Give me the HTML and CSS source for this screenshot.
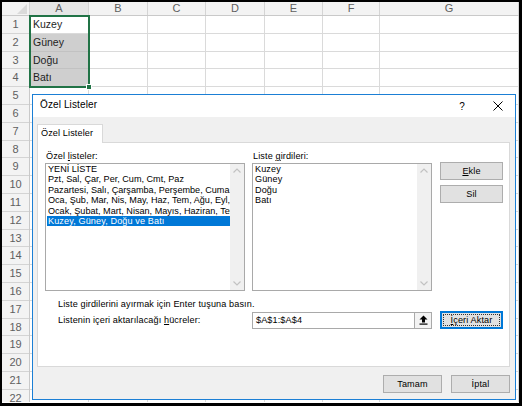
FILE: index.html
```html
<!DOCTYPE html>
<html>
	<head>
		<meta charset="utf-8">
		<title>Özel Listeler</title>

		<link rel="stylesheet" href="styles.css">
	</head>
	<body>
		<div class="frame">
			<div class="col-heads">
				<div class="corner w-hd"><span class="corner-tri"></span></div>
				<div class="col-head w-a sel">A</div>
				<div class="col-head w-b">B</div>
				<div class="col-head w-c">C</div>
				<div class="col-head w-d">D</div>
				<div class="col-head w-e">E</div>
				<div class="col-head w-f">F</div>
				<div class="col-head w-g">G</div>
			</div>
			<div class="sheet-body">
				<div class="row-heads w-hd">
					<div class="row-head">1</div>
					<div class="row-head">2</div>
					<div class="row-head">3</div>
					<div class="row-head">4</div>
					<div class="row-head">5</div>
					<div class="row-head">6</div>
					<div class="row-head">7</div>
					<div class="row-head">8</div>
					<div class="row-head">9</div>
					<div class="row-head">10</div>
					<div class="row-head">11</div>
					<div class="row-head">12</div>
					<div class="row-head">13</div>
					<div class="row-head">14</div>
					<div class="row-head">15</div>
					<div class="row-head">16</div>
					<div class="row-head">17</div>
					<div class="row-head">18</div>
					<div class="row-head">19</div>
					<div class="row-head">20</div>
					<div class="row-head">21</div>
					<div class="row-head">22</div>
				</div>
				<div class="col w-a col-a">
					<div class="cell">Kuzey</div>
					<div class="cell shaded">Güney</div>
					<div class="cell shaded">Doğu</div>
					<div class="cell shaded">Batı</div>
					<div class="selection"><span class="fill-handle"></span></div>
				</div>
				<div class="col w-b"></div>
				<div class="col w-c"></div>
				<div class="col w-d"></div>
				<div class="col w-e"></div>
				<div class="col w-f"></div>
				<div class="col w-g"></div>
			</div>

			<div class="dialog">
				<div class="dlg-title">
					<span class="dlg-caption">Özel Listeler</span>
					<span class="dlg-help">?</span>
					<span class="dlg-close">
						<svg width="10" height="10" viewBox="0 0 10 10"><path d="M0.5 0.5 9.5 9.5M9.5 0.5 0.5 9.5" stroke="#000" stroke-width="1" fill="none"/></svg>
					</span>
				</div>
				<div class="dlg-body">
					<div class="tabs">
						<div class="tab">Özel Listeler</div>
					</div>
					<div class="tab-page">
						<div class="lists">
							<div class="field-label">Özel <u>l</u>isteler:</div>
							<div class="field-label">Liste <u>g</u>irdileri:</div>
							<div></div>

							<div class="listbox">
								<ul class="items">
									<li>YENİ LİSTE</li>
									<li>Pzt, Sal, Çar, Per, Cum, Cmt, Paz</li>
									<li>Pazartesi, Salı, Çarşamba, Perşembe, Cuma, Cu</li>
									<li>Oca, Şub, Mar, Nis, May, Haz, Tem, Ağu, Eyl, Eki</li>
									<li>Ocak, Şubat, Mart, Nisan, Mayıs, Haziran, Tem</li>
									<li class="selected">Kuzey, Güney, Doğu ve Batı</li>
								</ul>
								<div class="vscroll">
									<svg width="14" height="14" viewBox="0 0 14 14"><path d="M3.5 8.5 7 5l3.5 3.5" fill="none" stroke="#c2c2c2" stroke-width="1.2"/></svg>
									<svg width="14" height="14" viewBox="0 0 14 14"><path d="M3.5 5.5 7 9l3.5-3.5" fill="none" stroke="#c2c2c2" stroke-width="1.2"/></svg>
								</div>
							</div>

							<div class="listbox">
								<div class="entries">
									<div>Kuzey</div>
									<div>Güney</div>
									<div>Doğu</div>
									<div>Batı</div>
								</div>
								<div class="vscroll">
									<svg width="14" height="14" viewBox="0 0 14 14"><path d="M3.5 8.5 7 5l3.5 3.5" fill="none" stroke="#c2c2c2" stroke-width="1.2"/></svg>
									<svg width="14" height="14" viewBox="0 0 14 14"><path d="M3.5 5.5 7 9l3.5-3.5" fill="none" stroke="#c2c2c2" stroke-width="1.2"/></svg>
								</div>
							</div>

							<div class="side-buttons">
								<button class="btn"><u>E</u>kle</button>
								<button class="btn">Sil</button>
							</div>
						</div>

						<p class="hint">Liste girdilerini ayırmak için Enter tuşuna basın.</p>

						<div class="import-row">
							<label class="import-label">Listenin içeri aktarılacağı <u>h</u>ücreler:</label>
							<div class="ref-box">
								<span class="ref-text">$A$1:$A$4</span>
								<span class="ref-btn">
									<svg width="9" height="10" viewBox="0 0 9 10"><path d="M4.5 0.5 8.5 4.5H6V7.5H3V4.5H0.5Z" fill="#000"/><rect x="0.5" y="8.5" width="8" height="1.2" fill="#000"/></svg>
								</span>
							</div>
							<button class="btn btn-focus"><span class="focus-rect"><u>İ</u>çeri Aktar</span></button>
						</div>
					</div>
					<div class="dlg-footer">
						<button class="btn btn-wide">Tamam</button>
						<button class="btn btn-wide">İptal</button>
					</div>
				</div>
			</div>
		</div>
	</body>
</html>
```

FILE: styles.css
```css
* {
	margin: 0;
	padding: 0;
	box-sizing: border-box;
}

body {
	background: #ffffff;
	font-family: "Liberation Sans", Arial, sans-serif;
}

.frame {
	position: relative;
	width: 522px;
	height: 406px;
	border: solid #000000;
	border-width: 2px 3px 3px 2px;
	overflow: hidden;
	background: #ffffff;
}

/* column widths shared by header and body */
.w-hd { width: 28px; flex: none; }
.w-a, .w-b, .w-d { width: 59px; flex: none; }
.w-c, .w-e { width: 58px; flex: none; }
.w-f { width: 57px; flex: none; }
.w-g { flex: 1; }

.col-heads {
	display: flex;
	height: 14px;
	background: #f3f3f3;
	border-bottom: 1px solid #c9c9c9;
}

.corner {
	position: relative;
	border-right: 1px solid #d4d4d4;
}

.corner-tri {
	position: absolute;
	right: 2px;
	bottom: 1px;
	width: 0;
	height: 0;
	border-left: 10px solid transparent;
	border-bottom: 10px solid #dadada;
}

.col-head {
	border-right: 1px solid #d4d4d4;
	font-size: 11px;
	line-height: 13px;
	color: #5f5f5f;
	text-align: center;
}

.col-head.sel {
	background: #e6e6e6;
}

.sheet-body {
	display: flex;
	height: 386px;
}

.row-heads {
	background: #f3f3f3;
	border-right: 1px solid #c9c9c9;
}

.row-head {
	height: 17.8px;
	border-bottom: 1px solid #d4d4d4;
	font-size: 11px;
	line-height: 17px;
	color: #5f5f5f;
	text-align: center;
}

.col {
	border-right: 1px solid #dadada;
	background: repeating-linear-gradient(to bottom, #ffffff 0, #ffffff 16.8px, #dadada 16.8px, #dadada 17.8px);
}

.col-a {
	position: relative;
}

.cell {
	height: 17.8px;
	padding-left: 3px;
	border-bottom: 1px solid #dadada;
	background: #ffffff;
	font-size: 10.5px;
	line-height: 17px;
	color: #1e1e1e;
}

.cell.shaded {
	background: #cfcfcf;
	border-bottom-color: #c2c2c2;
}

.selection {
	position: absolute;
	left: -1px;
	top: -1px;
	width: 61px;
	height: 73.2px;
	border: 2px solid #217346;
}

.fill-handle {
	position: absolute;
	right: -4px;
	bottom: -4px;
	width: 6px;
	height: 6px;
	background: #217346;
	border: 1px solid #ffffff;
}

/* dialog */
.dialog {
	position: absolute;
	left: 30px;
	top: 92px;
	width: 484px;
	height: 306px;
	border: 1px solid #1b7fd5;
	background: #f0f0f0;
	display: flex;
	flex-direction: column;
	font-size: 9.1px;
	letter-spacing: 0.12px;
	color: #000000;
}

.dlg-title {
	display: flex;
	align-items: center;
	height: 22px;
	padding-left: 7px;
	background: #ffffff;
}

.dlg-caption {
	font-size: 10px;
	margin-top: -3px;
}

.dlg-help {
	margin-left: auto;
	width: 28px;
	text-align: center;
	font-size: 10px;
}

.dlg-close {
	display: flex;
	justify-content: center;
	width: 28px;
	margin-left: 8px;
	margin-right: 3px;
}

.dlg-body {
	flex: 1;
	padding: 7px 5px 0 4px;
}

.tabs {
	display: flex;
	height: 18px;
}

.tab {
	position: relative;
	z-index: 1;
	height: 19px;
	padding: 0 9px 0 3px;
	border: 1px solid #d9d9d9;
	border-bottom: none;
	background: #ffffff;
	line-height: 17px;
}

.tab-page {
	height: 225px;
	padding: 7px 0 0 7px;
	border: 1px solid #d9d9d9;
	background: #ffffff;
}

.lists,
.import-row {
	display: grid;
	grid-template-columns: 200px 180px 64px;
	column-gap: 7px;
}

.lists {
	grid-template-rows: 13px 128px;
}

.field-label {
	padding-left: 1px;
	line-height: 12px;
}

.listbox {
	display: flex;
	border: 1px solid #a9a9a9;
	background: #ffffff;
	overflow: hidden;
}

.items {
	flex: 1;
	min-width: 0;
	list-style: none;
	padding-left: 1px;
}

.items li {
	padding-left: 1px;
	line-height: 10.4px;
	letter-spacing: 0;
	white-space: nowrap;
	overflow: hidden;
}

.items li.selected {
	background: #0078d7;
	color: #ffffff;
	letter-spacing: 0.12px;
}

.entries {
	flex: 1;
	padding-left: 2px;
}

.entries div {
	line-height: 10.4px;
	white-space: nowrap;
	overflow: hidden;
}

.vscroll {
	display: flex;
	flex-direction: column;
	justify-content: space-between;
	width: 14px;
	flex: none;
	background: #f0f0f0;
}

.vscroll svg {
	display: block;
}

.side-buttons {
	display: flex;
	flex-direction: column;
	gap: 6px;
	padding-left: 1px;
}

.btn {
	display: block;
	height: 18px;
	border: 1px solid #adadad;
	background: #e1e1e1;
	font-family: inherit;
	font-size: 9.1px;
	letter-spacing: inherit;
	color: #000000;
	text-align: center;
}

.side-buttons .btn {
	margin-top: -1px;
}

.hint {
	margin-top: 7px;
	padding-left: 13px;
	line-height: 12px;
}

.import-row {
	margin-top: 1px;
	align-items: center;
}

.import-label {
	padding-left: 13px;
}

.ref-box {
	display: flex;
	height: 17px;
	border: 1px solid #a9a9a9;
	background: #ffffff;
}

.ref-text {
	flex: 1;
	padding-left: 3px;
	line-height: 15px;
}

.ref-btn {
	display: flex;
	align-items: center;
	justify-content: center;
	width: 17px;
	border-left: 1px solid #a9a9a9;
	background: #f3f3f3;
}

.btn-focus {
	margin-left: 1px;
	width: 63px;
	border-color: #0078d7;
	box-shadow: inset 0 0 0 1px #0078d7;
	padding: 2px;
}

.focus-rect {
	display: block;
	height: 12px;
	line-height: 11px;
	border: 1px dotted #333333;
}

.dlg-footer {
	display: flex;
	justify-content: flex-end;
	gap: 9px;
	margin-top: 8px;
}

.btn-wide {
	width: 59px;
}
```
